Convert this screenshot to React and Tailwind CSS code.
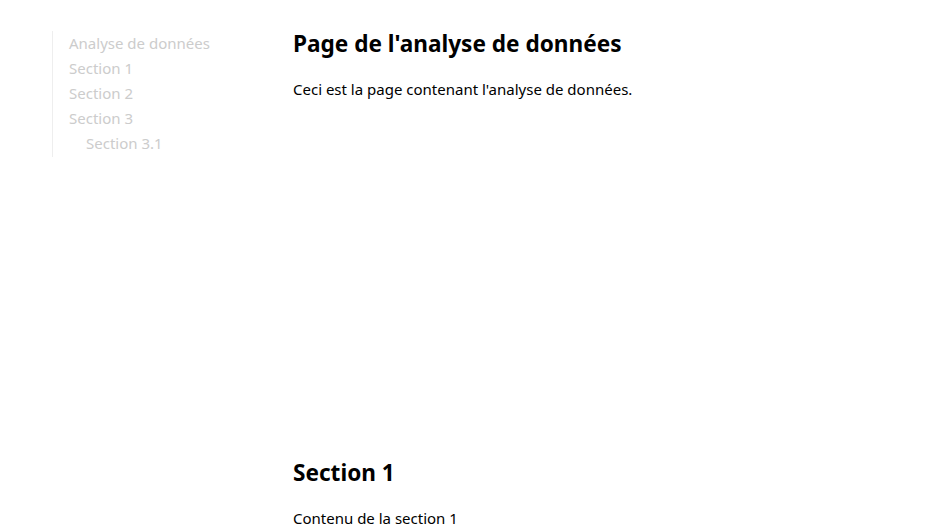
import React from 'react';

const links = [
    { label: 'Analyse de données', sub: false },
    { label: 'Section 1', sub: false },
    { label: 'Section 2', sub: false },
    { label: 'Section 3', sub: false },
    { label: 'Section 3.1', sub: true },
];

export default function App() {
    return (
        <div className="h-[524px] overflow-hidden bg-white flex font-['Noto_Sans','Open_Sans',sans-serif]">
            <nav className="w-[293px] shrink-0 pl-[52px] pt-[31px]">
                <ul className="border-l border-[#eeeeee] pl-4 pb-[1px]">
                    {links.map(link => (
                        <li key={link.label} className={`h-[25px] leading-[25px] text-[15px] text-[#cccccc] ${link.sub ? 'pl-[17px]' : ''}`}>
                            {link.label}
                        </li>
                    ))}
                </ul>
            </nav>

            <main className="flex-1 pt-[29px] text-black">
                <section className="h-[429px]">
                    <h1 className="text-[22.6px] font-bold leading-[29px]">Page de l'analyse de données</h1>
                    <p className="mt-[21px] text-[15px] leading-[20px]">Ceci est la page contenant l'analyse de données.</p>
                </section>
                <section>
                    <h2 className="text-[22.6px] font-bold leading-[29px]">Section 1</h2>
                    <p className="mt-[21px] text-[15px] leading-[20px]">Contenu de la section 1</p>
                </section>
            </main>
        </div>
    );
}
